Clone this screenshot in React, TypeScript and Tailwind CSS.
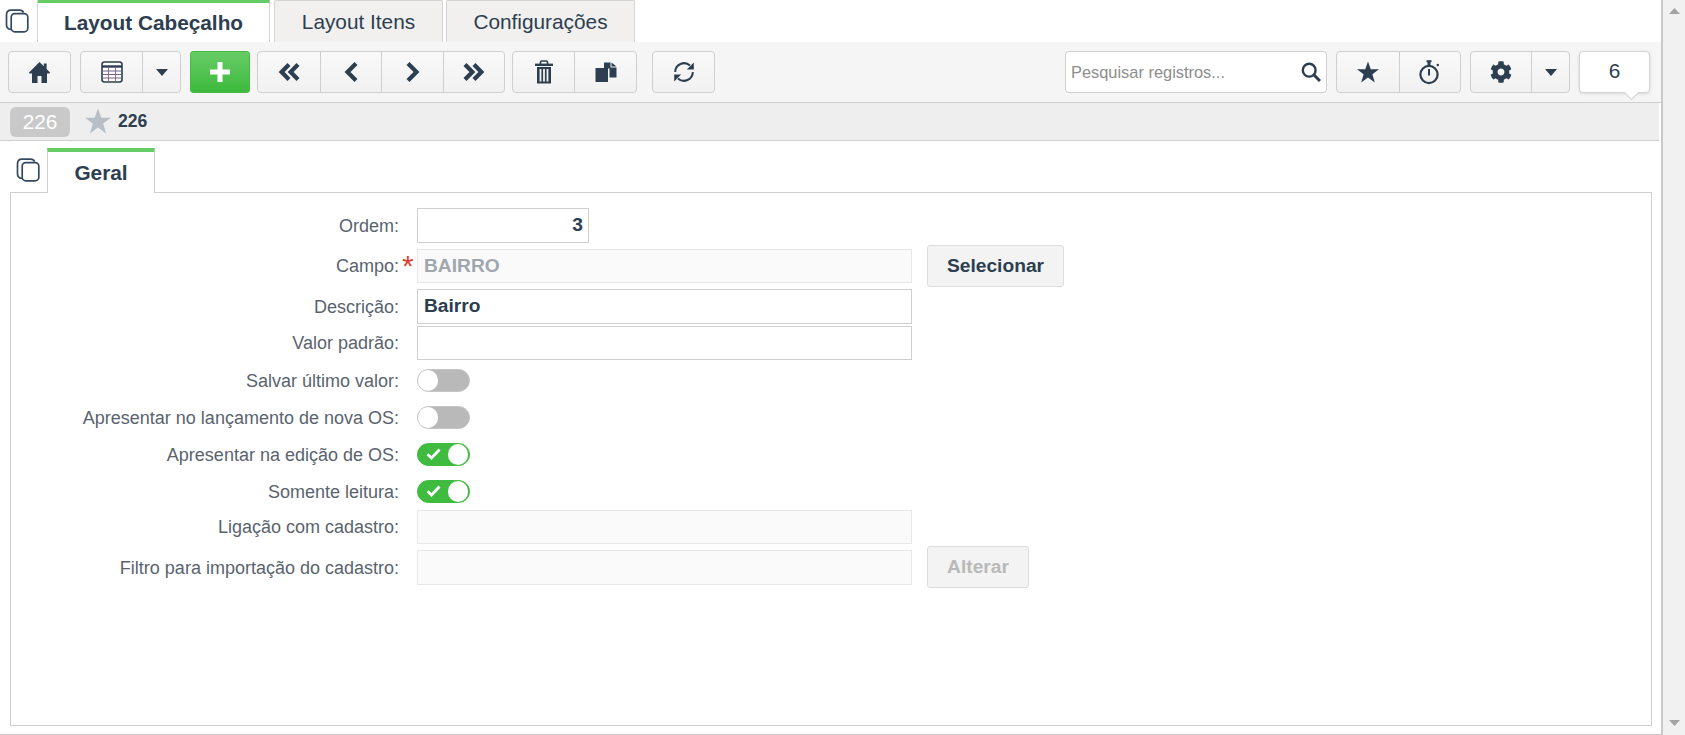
import { ReactNode } from "react";
import { FaCog } from "react-icons/fa";

const DARK = "#2c3e50";

function CopyIcon() {
  return (
    <svg width="24" height="24" viewBox="0 0 24 24" fill="none" stroke="#34495e" strokeWidth="1.7">
      <path d="M6 20.5 C3 20 1.5 18.5 1.5 16 V6 C1.5 3 3.5 1.2 6 1.2 H14.5 C16.5 1.2 18 2 18.6 3.6" />
      <rect x="6.2" y="4.6" width="16.6" height="18.2" rx="3.6" />
    </svg>
  );
}

function HomeIcon() {
  return (
    <svg width="21" height="21" viewBox="0 0 21 21" fill={DARK}>
      <path d="M10.5 0 L14.8 4.3 V1.5 H17.6 V7.1 L21 10.5 L20.5 11.5 H18 V21 H12.5 V14 H8.5 V21 H3 V11.5 H0.5 L0 10.5 Z" />
    </svg>
  );
}

function TableIcon() {
  return (
    <svg width="22" height="22" viewBox="0 0 22 22" fill="none">
      <rect x="1" y="1" width="20" height="20" rx="2.5" fill="#fff" stroke={DARK} strokeWidth="1.6" />
      <path d="M1 5.5 H21" stroke={DARK} strokeWidth="2.4" />
      <path d="M7.5 6 V20 M14.5 6 V20" stroke="#a06a8c" strokeWidth="1" />
      <path d="M2 10 H20 M2 13.5 H20 M2 17 H20" stroke="#6f6486" strokeWidth="1" />
    </svg>
  );
}

function Caret() {
  return (
    <svg width="12" height="7" viewBox="0 0 12 7">
      <polygon points="0,0 12,0 6,7" fill="#2c3e50" />
    </svg>
  );
}

function Chevrons({ dir, double }: { dir: "left" | "right"; double?: boolean }) {
  const flip = dir === "right" ? "translate(24 0) scale(-1 1)" : undefined;
  return (
    <svg width="24" height="24" viewBox="0 0 24 24" fill="none" stroke={DARK} strokeWidth="4.2">
      <g transform={flip}>
        {double ? (
          <>
            <path d="M12 4.5 L4.6 12 L12 19.5" />
            <path d="M21 4.5 L13.6 12 L21 19.5" />
          </>
        ) : (
          <path d="M17 3.5 L8.5 12 L17 20.5" />
        )}
      </g>
    </svg>
  );
}

function StarIcon({ size, color }: { size: number; color: string }) {
  return (
    <svg width={size} height={size} viewBox="0 0 24 24" fill={color}>
      <polygon points="12,0.5 15,9 24,9 16.8,14.4 19.4,23.5 12,18 4.6,23.5 7.2,14.4 0,9 9,9" />
    </svg>
  );
}

function TrashIcon() {
  return (
    <svg width="20" height="24" viewBox="0 0 20 24">
      <path d="M6.5 4 V2 C6.5 1.2 7 1 7.8 1 H12.2 C13 1 13.5 1.2 13.5 2 V4" fill="none" stroke={DARK} strokeWidth="1.6" />
      <rect x="1" y="3.6" width="18" height="2.4" fill={DARK} />
      <path
        d="M3 7 H17 V23.5 H3 Z M5.6 9 V21.5 H7.4 V9 Z M9.1 9 V21.5 H10.9 V9 Z M12.6 9 V21.5 H14.4 V9 Z"
        fill={DARK}
        fillRule="evenodd"
      />
    </svg>
  );
}

function DocsIcon() {
  return (
    <svg width="22" height="20" viewBox="0 0 22 20" fill={DARK}>
      <path d="M9 0.5 H15.5 V5.5 H21.5 V15.5 H14.5 V6.5 L9 6.5 Z" />
      <path d="M16.5 0.5 L21.5 4.5 H16.5 Z" />
      <path d="M0.5 6 H6.5 H13 V20 H0.5 Z" />
    </svg>
  );
}

function RefreshIcon() {
  return (
    <svg width="22" height="22" viewBox="0 0 22 22" fill="none">
      <path d="M2.2 11 A8.8 8.8 0 0 1 17 4.6" stroke={DARK} strokeWidth="2" />
      <polygon points="20.8,1.4 20.8,8.4 13.8,8.4" fill={DARK} />
      <path d="M19.8 11 A8.8 8.8 0 0 1 5 17.4" stroke={DARK} strokeWidth="2" />
      <polygon points="1.2,20.6 1.2,13.6 8.2,13.6" fill={DARK} />
    </svg>
  );
}

function SearchIcon() {
  return (
    <svg width="20" height="20" viewBox="0 0 20 20" fill="none" stroke={DARK}>
      <circle cx="8.2" cy="8.2" r="6.4" strokeWidth="2.4" />
      <path d="M12.8 12.8 L19 19" strokeWidth="3" />
    </svg>
  );
}

function StopwatchIcon() {
  return (
    <svg width="22" height="25" viewBox="0 0 22 25" fill="none" stroke={DARK}>
      <circle cx="10" cy="14.5" r="8.6" strokeWidth="2.2" />
      <path d="M10 2 V5" strokeWidth="3" />
      <path d="M7.5 1.2 H12.5" strokeWidth="2" />
      <path d="M10 9 V15.5" strokeWidth="2" />
      <circle cx="18.8" cy="5" r="1.2" fill={DARK} stroke="none" />
    </svg>
  );
}

function CheckIcon() {
  return (
    <svg width="15" height="12" viewBox="0 0 15 12" fill="none" stroke="#fff" strokeWidth="2.8">
      <path d="M1.5 6.2 L5.5 10 L13.5 1.5" />
    </svg>
  );
}

function Btn({ children, className = "" }: { children: ReactNode; className?: string }) {
  return (
    <button className={`flex h-[42px] items-center justify-center rounded-[4px] border border-[#cfcfcf] bg-linear-to-b from-[#f9f9f9] to-[#f1f1f1] ${className}`}>
      {children}
    </button>
  );
}

function Group({ items }: { items: { w: string; icon: ReactNode }[] }) {
  return (
    <div className="flex h-[42px] rounded-[4px] border border-[#cfcfcf] bg-linear-to-b from-[#f9f9f9] to-[#f1f1f1]">
      {items.map((item, i) => (
        <button key={i} className={`flex items-center justify-center ${item.w} ${i > 0 ? "border-l border-[#cfcfcf]" : ""}`}>
          {item.icon}
        </button>
      ))}
    </div>
  );
}

function Toggle({ on }: { on?: boolean }) {
  if (on) {
    return (
      <div className="relative flex h-[23px] w-[53px] items-center justify-end rounded-full border border-[#3fbb3f] bg-[#3fbb3f] pr-[1px]">
        <span className="absolute left-[8px] top-[4px] flex">
          <CheckIcon />
        </span>
        <div className="h-[21px] w-[20px] rounded-full bg-white" />
      </div>
    );
  }
  return (
    <div className="flex h-[23px] w-[53px] items-center rounded-full border border-[#c4c4c4] bg-[#b9b9b9]">
      <div className="h-[21px] w-[20px] rounded-full bg-white" />
    </div>
  );
}

function Row({ label, height, top, children, star }: { label: string; height: string; top: string; children: ReactNode; star?: boolean }) {
  return (
    <div className={`flex items-center ${height} ${top}`}>
      <label className="relative w-[388px] shrink-0 text-right text-[18px] leading-[24px] text-[#59636e]">
        {label}
        {star && <span className="absolute left-[391px] -top-[3px] text-[30px] leading-[30px] text-[#d9423a]">*</span>}
      </label>
      <div className="ml-[18px] flex items-center">{children}</div>
    </div>
  );
}

export default function App() {
  return (
    <div className="flex h-screen w-full overflow-hidden bg-white font-['Liberation_Sans',Arial,sans-serif] text-[#2c3e50]">
      <div className="flex min-w-0 flex-1 flex-col border-b border-r-2 border-[#ccc8c8]">
        {/* top tabs */}
        <div className="flex h-[42px] shrink-0">
          <div className="flex w-[38px] items-center border-r border-[#d4d4d4] pl-[5px]">
            <CopyIcon />
          </div>
          <div className="flex w-[232px] items-center justify-center border-t-[3px] border-r border-[#66cc66] border-r-[#d4d4d4] bg-white text-[20.8px] font-bold">
            Layout Cabeçalho
          </div>
          <div className="ml-[4px] flex w-[169px] items-center justify-center rounded-t-[2px] border border-b-0 border-[#d4d4d4] bg-[#f1f0ee] text-[20.8px]">
            Layout Itens
          </div>
          <div className="ml-[3px] flex w-[189px] items-center justify-center rounded-t-[2px] border border-b-0 border-[#d4d4d4] bg-[#f1f0ee] text-[20.8px]">
            Configurações
          </div>
        </div>

        {/* toolbar */}
        <div className="flex h-[61px] shrink-0 items-start border-b border-[#cfcfcf] bg-[#f5f5f5] pl-[8px] pr-[11px] pt-[9px]">
          <Btn className="w-[63px]">
            <HomeIcon />
          </Btn>
          <div className="ml-[9px]">
            <Group
              items={[
                { w: "w-[61px]", icon: <TableIcon /> },
                { w: "w-[38px]", icon: <Caret /> },
              ]}
            />
          </div>
          <button className="ml-[9px] flex h-[42px] w-[60px] items-center justify-center rounded-[3px] border border-[#45bb45] bg-linear-to-b from-[#66cc66] to-[#3cb93c]">
            <svg width="22" height="22" viewBox="0 0 22 22" fill="#fff">
              <path d="M8.5 1 H13.5 V8.5 H21 V13.5 H13.5 V21 H8.5 V13.5 H1 V8.5 H8.5 Z" />
            </svg>
          </button>
          <div className="ml-[7px]">
            <Group
              items={[
                { w: "w-[62px]", icon: <Chevrons dir="left" double /> },
                { w: "w-[61px]", icon: <Chevrons dir="left" /> },
                { w: "w-[62px]", icon: <Chevrons dir="right" /> },
                { w: "w-[61px]", icon: <Chevrons dir="right" double /> },
              ]}
            />
          </div>
          <div className="ml-[7px]">
            <Group
              items={[
                { w: "w-[61px]", icon: <TrashIcon /> },
                { w: "w-[62px]", icon: <DocsIcon /> },
              ]}
            />
          </div>
          <Btn className="ml-[15px] w-[63px]">
            <RefreshIcon />
          </Btn>

          <div className="ml-auto flex h-[42px] w-[262px] items-center rounded-[4px] border border-[#cfcfcf] bg-white pl-[5px] pr-[5px]">
            <span className="flex-1 text-[16.4px] text-[#8d8d8d]">Pesquisar registros...</span>
            <SearchIcon />
          </div>
          <div className="ml-[9px]">
            <Group
              items={[
                { w: "w-[62px]", icon: <StarIcon size={22} color={DARK} /> },
                { w: "w-[61px]", icon: <StopwatchIcon /> },
              ]}
            />
          </div>
          <div className="ml-[9px]">
            <Group
              items={[
                { w: "w-[60px]", icon: <FaCog size={22} color={DARK} /> },
                { w: "w-[38px]", icon: <Caret /> },
              ]}
            />
          </div>
          <div className="relative ml-[9px] flex h-[42px] w-[71px] items-center justify-center rounded-[4px] border border-[#d4d4d4] bg-white pb-[2px] text-[20.8px] shadow-[0_1px_3px_rgba(0,0,0,0.12)]">
            6
            <span className="absolute -bottom-[6px] right-[12px] h-[11px] w-[11px] rotate-45 border-b border-r border-[#d0d0d0] bg-white" />
          </div>
        </div>

        {/* record bar */}
        <div className="mr-[2px] flex h-[38px] shrink-0 items-center border-b border-[#cfcfcf] bg-[#eeeeee] pl-[10px]">
          <div className="flex h-[30px] w-[60px] items-center justify-center rounded-[6px] bg-[#c9c9c9] text-[20.8px] text-white">226</div>
          <span className="-mt-[2px] ml-[15px] flex">
            <StarIcon size={26} color="#b8bec6" />
          </span>
          <span className="ml-[7px] text-[17.6px] font-bold">226</span>
        </div>

        {/* inner tabs */}
        <div className="flex h-[51px] shrink-0 items-end pl-[16px]">
          <div className="mb-[10px]">
            <CopyIcon />
          </div>
          <div className="relative -mb-px ml-[7px] flex h-[45px] w-[108px] items-center justify-center border-x border-t-[4px] border-[#d4d0d0] border-t-[#66cc66] bg-white text-[20.8px] font-bold">
            Geral
          </div>
        </div>

        {/* form panel */}
        <div className="mb-[8px] ml-[10px] mr-[9px] flex-1 border border-[#cfcfcf] bg-white pt-[15px]">
          <Row label="Ordem:" height="h-[35px]" top="mt-0">
            <div className="flex h-[35px] w-[172px] items-center justify-end border border-[#cfcfcf] px-[5px] text-[19.2px] font-bold">3</div>
          </Row>
          <Row label="Campo:" height="h-[34px]" top="mt-[6px]" star>
            <div className="flex h-[34px] w-[495px] items-center border border-[#e8e8e8] bg-[#fafafa] px-[6px] text-[19.2px] font-bold text-[#a0a6ae]">BAIRRO</div>
            <button className="ml-[15px] h-[42px] w-[137px] rounded-[3px] border border-[#dddddd] bg-[#f3f3f3] text-[19.2px] font-bold">Selecionar</button>
          </Row>
          <Row label="Descrição:" height="h-[35px]" top="mt-[6px]">
            <div className="flex h-[35px] w-[495px] items-center border border-[#cfcfcf] px-[6px] text-[19.2px] font-bold">Bairro</div>
          </Row>
          <Row label="Valor padrão:" height="h-[34px]" top="mt-[2px]">
            <div className="h-[34px] w-[495px] border border-[#cfcfcf]" />
          </Row>
          <Row label="Salvar último valor:" height="h-[23px]" top="mt-[9px]">
            <Toggle />
          </Row>
          <Row label="Apresentar no lançamento de nova OS:" height="h-[23px]" top="mt-[14px]">
            <Toggle />
          </Row>
          <Row label="Apresentar na edição de OS:" height="h-[23px]" top="mt-[14px]">
            <Toggle on />
          </Row>
          <Row label="Somente leitura:" height="h-[23px]" top="mt-[14px]">
            <Toggle on />
          </Row>
          <Row label="Ligação com cadastro:" height="h-[34px]" top="mt-[7px]">
            <div className="h-[34px] w-[495px] border border-[#e8e8e8] bg-[#fafafa]" />
          </Row>
          <Row label="Filtro para importação do cadastro:" height="h-[35px]" top="mt-[6px]">
            <div className="h-[35px] w-[495px] border border-[#e8e8e8] bg-[#fafafa]" />
            <button className="mb-[1px] ml-[15px] h-[42px] w-[102px] rounded-[3px] border border-[#dddddd] bg-[#f3f3f3] text-[19.2px] font-bold text-[#b9b9b9]">Alterar</button>
          </Row>
        </div>
      </div>

      {/* scrollbar */}
      <div className="flex h-full w-[22px] shrink-0 flex-col items-center justify-between bg-[#f1f1f1] pb-[9px] pt-[8px]">
        <svg width="11" height="6" viewBox="0 0 11 6">
          <polygon points="5.5,0 11,6 0,6" fill="#a3a3a3" />
        </svg>
        <svg width="11" height="6" viewBox="0 0 11 6">
          <polygon points="0,0 11,0 5.5,6" fill="#a3a3a3" />
        </svg>
      </div>
    </div>
  );
}
